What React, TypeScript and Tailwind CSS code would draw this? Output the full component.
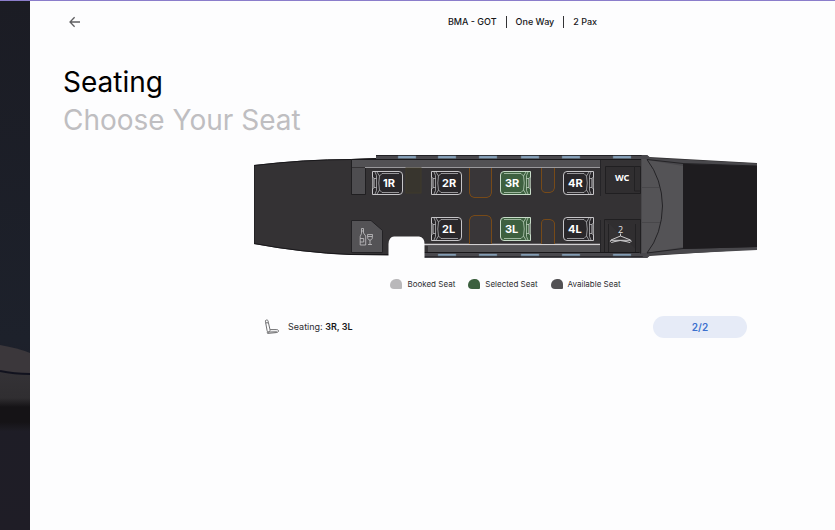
import { useState } from 'react'

type Seat = { id: string; place: string; facing: 'forward' | 'aft' }

const seats: Seat[] = [
  { id: '1R', place: 'left-[117px] top-[16px]', facing: 'aft' },
  { id: '2R', place: 'left-[176px] top-[16px]', facing: 'aft' },
  { id: '3R', place: 'left-[245px] top-[16px]', facing: 'forward' },
  { id: '4R', place: 'left-[308px] top-[16px]', facing: 'forward' },
  { id: '2L', place: 'left-[176px] top-[62px]', facing: 'aft' },
  { id: '3L', place: 'left-[245px] top-[62px]', facing: 'forward' },
  { id: '4L', place: 'left-[308px] top-[62px]', facing: 'forward' },
]

const legend = [
  { label: 'Booked Seat', color: 'bg-[#b9b8ba]' },
  { label: 'Selected Seat', color: 'bg-[#3c603f]' },
  { label: 'Available Seat', color: 'bg-[#525154]' },
]

const trip = ['BMA - GOT', 'One Way', '2 Pax']

function BackArrow() {
  return (
    <svg width="12" height="12" viewBox="0 0 12 12" fill="none" stroke="#5f5f61" strokeWidth="1.3" aria-hidden="true">
      <path d="M11 6H1.2M5.6 1.2L1 6l4.6 4.8" />
    </svg>
  )
}

function SeatIcon() {
  return (
    <svg width="16" height="16" viewBox="0 0 16 16" fill="none" stroke="#606062" strokeWidth="0.9" aria-hidden="true">
      <path d="M1.6 3.4C1.2 1.4 1.6 1 2.7 1s1.5.6 1.6 2.2l1.9 8.3-1.7 1.6c-1-.2-1.3-.6-1.4-1.5z" />
      <path d="M1.6 3.8h2.6M6.2 10.6h6c1.8 0 2.3.6 2.3 1.3 0 1-.8 1.5-2.3 1.7l-8.3.8c-1 0-1-1 0-1.4l9-.2" />
    </svg>
  )
}

/* Fuselage seen from above, nose to the right */
function Fuselage() {
  return (
    <svg className="block w-full" viewBox="0 0 503 104" fill="none" aria-hidden="true">
      {/* tail and cabin shell */}
      <path d="M0 11Q50 5 97 5L122 4V1H393L395 3L503 9V95L395 102L393 104H170V102L97 101Q48 99 0 90Z" fill="#343234" />
      <path d="M0 11.5Q50 5.5 97 5.5L122 4.5" stroke="#19181b" />
      <path d="M0 89.5Q48 98.5 97 100.5H135" stroke="#19181b" />
      <path d="M0.5 12V89" stroke="#242326" />

      {/* outer rails */}
      <path d="M122 1H390L395 5H122Z" fill="#49484d" />
      <path d="M122 1.5H391" stroke="#222125" />
      <path d="M170 99H395L391 104H170Z" fill="#49484d" />
      <path d="M170 102.5H392" stroke="#2b2a2e" />
      <path d="M97 5.5H393M170 98.5H393" stroke="#19181b" />

      {/* side ledges */}
      <path d="M97 6H346V13H97Z" fill="#525154" />
      <path d="M97 14H111V40H97Z" fill="#4e4d50" />
      <path d="M174 92H346V98H174Z" fill="#535255" />
      <path d="M97.5 5V40.5H111.5V14" stroke="#201f21" />
      <path d="M111 13.5H346" stroke="#9a999c" />
      <path d="M170 90.5H346" stroke="#d1d0d2" strokeWidth="1.5" />
      <path d="M346.5 6V42M346.5 66V98" stroke="#252427" />

      {/* tables */}
      <rect x="152" y="14" width="15" height="25" fill="#38352e" stroke="#3f3a2b" />
      <g fill="#393638" stroke="#774a18">
        <path d="M215.5 14V39Q216 43 220 43.5H233Q237 43 237.500 39V14" />
        <path d="M215.5 90V66Q216 62 220 61.5H233Q237 62 237.500 66V90" />
        <path d="M287.5 14V35Q288 38 291 38.5H296Q300 38 300.500 34V14" />
        <path d="M287.5 90V69Q288 65 292 65.500H296Q300 66 300.500 69V90" />
      </g>

      {/* windows */}
      <g fill="#8fabc6" stroke="#5d6e7b" strokeWidth="0.5">
        <path d="M144 2h18v2.2h-18zM184 2h18v2.2h-18zM225 2h18v2.2h-18zM267 2h18v2.2h-18zM308 2h18v2.2h-18zM359 2h18v2.2h-18z" />
        <path d="M184 100h18v1.8h-18zM225 100h18v1.8h-18zM267 100h18v1.8h-18zM308 100h18v1.8h-18zM359 100h18v1.8h-18z" />
      </g>

      {/* galley */}
      <path d="M97.5 66.5H117L128.5 76.5V98.5H97.5Z" fill="#545356" stroke="#232225" />
      <g stroke="#c5c4c6" strokeWidth="0.8">
        <path d="M107.500 74.500h2v4.500l2.200 3V91h-5.500v-8.500l1.300-3zM107.500 77h2M106.200 84.500h3.500v3.500h-3.500" />
        <path d="M113.500 80.500h5l-.3 4c-.4 2-4 2-4.400 0zM116 86v4.500M114 90.500h4M113.700 82.500h4.600" />
      </g>

      {/* boarding door */}
      <path d="M134.500 104V90Q135 82.500 140 82.500H165Q170.500 83 170.500 90V104Z" fill="#fdfdfe" />

      {/* lavatory and wardrobe */}
      <path d="M351.500 12.500H386.500V39.500H351.500ZM350.500 65.500H386.500V99.500" fill="#302e30" stroke="#201f21" />
      <path d="M380.500 12V37H386M350.500 65.500V98M354.500 70V98M381.500 70V98" stroke="#222123" />
      <text x="361" y="27" fill="#ffffff" fontSize="9" fontWeight="700" fontFamily="'Noto Sans', sans-serif">WC</text>
      <text x="364" y="79" fill="#e4e3e5" fontSize="9" fontFamily="'Open Sans', sans-serif">2</text>
      <path
        d="M366.500 79.500v2.500L357 86Q355.500 87.500 357.500 88.500L361 87.500Q366 85.500 372 87.500L376 88.500Q378 87.500 376.500 86L366.500 82M357 86.300h19.500"
        stroke="#cccbcd"
      />

      {/* cockpit and nose */}
      <path d="M387 5H393L429 10V95L393 99H387Z" fill="#545356" />
      <path d="M393 5.500Q408 25 408.500 52Q408 80 393 99" stroke="#242326" />
      <path d="M387.500 5V99M388 33.500H405M388 68.500H406" stroke="#454447" strokeWidth="0.800" />
      <path d="M387 1H393L397 4L503 9.500V12H429L393 6Z" fill="#49484c" />
      <path d="M387 104H393L397 101L503 96V93H429L393 99Z" fill="#49484c" />
      <path d="M393 5.500L429 9.500L503 12M393 99L429 94.500L503 92.500" stroke="#242326" />
      <path d="M429 10H434L503 12V93L429 95Z" fill="#1e1c1f" />
    </svg>
  )
}

function SeatButton({ seat, selected, onToggle }: { seat: Seat; selected: boolean; onToggle: () => void }) {
  const aft = seat.facing === 'aft'
  return (
    <button
      type="button"
      aria-pressed={selected}
      onClick={onToggle}
      className={`absolute h-[26px] w-[33px] cursor-pointer ${seat.place}`}
    >
      <svg
        className={`absolute inset-0 ${aft ? '' : '-scale-x-100'}`}
        width="33"
        height="26"
        viewBox="0 0 33 26"
        fill="none"
        stroke={selected ? '#c8dcc9' : '#c6c5c8'}
        aria-hidden="true"
      >
        <path d="M1.500 1.500H28Q31.500 1.500 31.500 5V21Q31.500 24.500 28 24.500H1.500V19L3 17.500V8.500L1.500 7Z" fill={selected ? '#3d603f' : '#29272a'} />
        <path d="M1.500 7V19M4 2L5.500 5.500V20.500L4 24M5.500 8.500H3M5.500 17.500H3" strokeWidth="0.700" />
        <path d="M6 2L8.500 6Q7 13 8.500 20L6 24M8.500 6L11 3.500H28M8.500 20L11 22.500H28" strokeWidth="0.700" />
      </svg>
      <span
        className={`absolute inset-y-0 flex items-center text-[11px] font-bold text-white ${aft ? 'left-[12px]' : 'left-[6px]'}`}
      >
        {seat.id}
      </span>
    </button>
  )
}

function SidePhoto() {
  return (
    <aside className="w-[30px] shrink-0 overflow-hidden bg-[#1b1d26]" aria-hidden="true">
      <svg className="block w-full" viewBox="0 0 30 530">
        <defs>
          <linearGradient id="dusk" x1="0" y1="0" x2="0" y2="1">
            <stop offset="0" stopColor="#1b1c24" />
            <stop offset="0.64" stopColor="#1d212b" />
            <stop offset="0.8" stopColor="#1e1d26" />
            <stop offset="1" stopColor="#1f1d26" />
          </linearGradient>
          <linearGradient id="body" x1="0" y1="0" x2="0" y2="1">
            <stop offset="0" stopColor="#343236" />
            <stop offset="0.45" stopColor="#302e31" />
            <stop offset="0.6" stopColor="#151316" />
            <stop offset="0.85" stopColor="#151316" />
            <stop offset="1" stopColor="#1e1d25" />
          </linearGradient>
        </defs>
        <path fill="url(#dusk)" d="M0 0h30v530H0z" />
        <path fill="#3b373b" d="M0 344Q18 347 30 352V374H0z" />
        <path fill="url(#body)" d="M0 370L30 373V430H0z" />
        <path d="M0 370Q14 373 30 373" fill="none" stroke="#11121e" strokeWidth="2" />
      </svg>
    </aside>
  )
}

export default function App() {
  const [selected, setSelected] = useState(['3R', '3L'])

  const toggle = (id: string) => {
    setSelected(s => (s.includes(id) ? s.filter(x => x !== id) : s.length < 2 ? [...s, id] : s))
  }

  return (
    <div className="flex min-h-screen border-t border-[#8b7dcb] bg-[#fdfdfe] font-['Inter',sans-serif] text-black">
      <SidePhoto />

      <main className="min-w-0 flex-1">
        <header className="grid h-[42px] grid-cols-[1fr_auto_1fr] items-center pl-[39px] pr-[15px]">
          <button type="button" aria-label="Back" className="cursor-pointer justify-self-start">
            <BackArrow />
          </button>
          <ul className="ml-[156px] flex divide-x divide-[#333335] text-[9px] leading-[12px] font-medium text-[#171719]">
            {trip.map(item => (
              <li key={item} className="px-[9px]">{item}</li>
            ))}
          </ul>
        </header>

        <h1 className="mt-5 pl-[33px] text-[28px] leading-[38px]">
          Seating
          <span className="block text-[#bfbec1]">Choose Your Seat</span>
        </h1>

        <section className="mt-[15px] ml-[224px] w-[503px]" aria-label="Seat map">
          <div className="relative">
            <Fuselage />
            {seats.map(seat => (
              <SeatButton
                key={seat.id}
                seat={seat}
                selected={selected.includes(seat.id)}
                onToggle={() => toggle(seat.id)}
              />
            ))}
          </div>

          <ul className="mt-5 flex justify-center gap-[13px] text-[8px] leading-[12px] text-[#2e2e31]">
            {legend.map(({ label, color }) => (
              <li key={label} className="flex items-center gap-[5px]">
                <span className={`h-[10px] w-[12px] rounded-tl-[6px] rounded-tr-[5px] rounded-br-[1px] rounded-bl-[4px] ${color}`} />
                {label}
              </li>
            ))}
          </ul>

          <div className="mt-[26px] flex items-center pr-[10px] pl-[10px]">
            <SeatIcon />
            <p className="ml-2 text-[9px] leading-[12px] text-[#2e2e31]">
              Seating: <strong className="font-semibold text-[#171719]">{selected.join(', ')}</strong>
            </p>
            <button
              type="button"
              className="ml-auto h-[22px] w-[94px] cursor-pointer rounded-full bg-[#e6ebf7] text-[10px] font-semibold text-[#3c70ce]"
            >
              {selected.length}/2
            </button>
          </div>
        </section>
      </main>
    </div>
  )
}
